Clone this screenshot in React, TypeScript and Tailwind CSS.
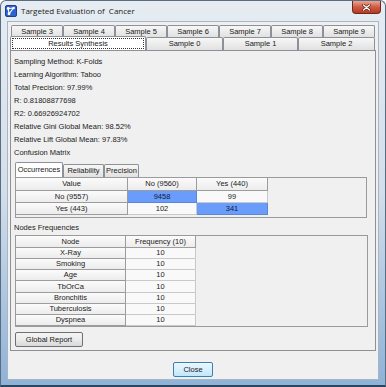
import React from "react";

const F = "font-['Liberation_Sans',Arial,sans-serif]";

function Tab({ label, w, selected, h }: { label: string; w?: string; selected?: boolean; h: string }) {
  return (
    <div
      className={`${w ?? "flex-1"} ${h} flex items-center justify-center border-t border-l border-r border-[#8d9096] rounded-t-[2px] text-[7.5px] text-[#1a1a1a] leading-none ${
        selected ? "bg-white relative z-10" : "bg-gradient-to-b from-[#f7f7f7] to-[#e1e1e1]"
      }`}
    >
      {label}
    </div>
  );
}

function HeadCell({ w, h, children }: { w: string; h: string; children: React.ReactNode }) {
  return (
    <div className={`${w} ${h} flex items-center justify-center border-r border-b border-[#9c9c9c] bg-gradient-to-b from-[#fbfbfb] to-[#ececec] text-[7.5px] text-[#1a1a1a] leading-none`}>
      {children}
    </div>
  );
}

function DataCell({ w, h, sel, children }: { w: string; h: string; sel?: boolean; children: React.ReactNode }) {
  return (
    <div
      className={`${w} ${h} flex items-center justify-center border-r border-b text-[7.5px] leading-none ${
        sel ? "bg-[#6a9cfb] border-[#5a86d6] text-[#0e1a3a]" : "bg-[#f9f9f9] border-[#c9c9c9] text-[#1a1a1a]"
      }`}
    >
      {children}
    </div>
  );
}

function Line({ children }: { children: React.ReactNode }) {
  return <div className="h-[13px] leading-[13px] text-[7.5px] text-[#1a1a1a] whitespace-pre">{children}</div>;
}

export default function App() {
  const nodes = ["X-Ray", "Smoking", "Age", "TbOrCa", "Bronchitis", "Tuberculosis", "Dyspnea"];
  const rowH = ["h-[11px]", "h-[11px]", "h-[11px]", "h-[12px]", "h-[11px]", "h-[11px]", "h-[11px]"];
  return (
    <div
      className={`w-[386px] h-[387px] flex flex-col bg-gradient-to-b from-[#e6ecf2] via-[#d2deea] to-[#8fb2d8] border border-[#5a6c80] border-b-[2px] border-b-[#2b4660] rounded-t-[6px] overflow-hidden ${F}`}
    >
      {/* Title bar */}
      <div className="h-[20px] flex items-start shrink-0">
        <div className="flex items-center h-[18px] pl-[4px] pt-[2px]">
          <svg width="12" height="12" viewBox="0 0 12 12">
            <rect x="0.5" y="0.5" width="11" height="11" rx="1.5" fill="#2f62cf" stroke="#1b3f91" />
            <path d="M3.2 3.5 L8.5 3 M3.2 3.5 L4 8.8 M8.5 3 L4 8.8" stroke="#ffffff" strokeWidth="1.1" fill="none" />
            <circle cx="3.2" cy="3.5" r="1.4" fill="#ffffff" />
            <circle cx="8.6" cy="3" r="1.3" fill="#ffffff" />
            <circle cx="4" cy="8.8" r="1.4" fill="#ffffff" />
          </svg>
          <span className="ml-[4px] text-[8px] text-[#1b1b1b] whitespace-pre font-['Open_Sans',Arial,sans-serif] leading-none">
            Targeted Evaluation of  Cancer
          </span>
        </div>
        <div className="ml-auto mr-[4px] w-[29px] h-[13px] rounded-b-[4px] border border-t-0 border-[#6b2a1c] bg-gradient-to-b from-[#e9a597] via-[#cf5b43] to-[#b8391f] flex items-center justify-center">
          <svg width="9" height="7" viewBox="0 0 9 7">
            <path d="M1.5 1 L7.5 6 M7.5 1 L1.5 6" stroke="#5a1a10" strokeWidth="2.6" strokeLinecap="round" />
            <path d="M1.5 1 L7.5 6 M7.5 1 L1.5 6" stroke="#ffffff" strokeWidth="1.4" strokeLinecap="round" />
          </svg>
        </div>
      </div>

      {/* Client area */}
      <div className="flex-1 mx-[6px] mb-[5px] bg-[#f0f0f0] border border-[#a8b5c3] flex flex-col px-[2px] pt-[3px]">
        {/* Tab row 1 */}
        <div className="flex h-[12px] mx-[1px]">
          {["Sample 3", "Sample 4", "Sample 5", "Sample 6", "Sample 7", "Sample 8", "Sample 9"].map((s) => (
            <Tab key={s} label={s} h="h-[12px]" />
          ))}
        </div>
        {/* Tab row 2 */}
        <div className="flex items-end h-[13px] mr-[1px]">
          <div className="w-[136px] h-[14px] bg-white border-t border-l border-r border-[#8d9096] rounded-t-[2px] relative z-10 p-[1px]">
            <div className="w-full h-full border border-dotted border-[#333] flex items-center justify-center text-[7.5px] leading-none text-[#1a1a1a]">
              Results Synthesis
            </div>
          </div>
          <Tab label="Sample 0" w="w-[77px]" h="h-[13px]" />
          <Tab label="Sample 1" w="w-[75px]" h="h-[13px]" />
          <Tab label="Sample 2" w="w-[77px]" h="h-[13px]" />
        </div>

        {/* Panel */}
        <div className="h-[301px] border border-[#8d9096] bg-[#f0f0f0] flex flex-col pl-[3px] pt-[4px]">
          <Line>Sampling Method: K-Folds</Line>
          <Line>Learning Algorithm: Taboo</Line>
          <Line>Total Precision: 97.99%</Line>
          <Line>R: 0.81808877698</Line>
          <Line>R2: 0.66926924702</Line>
          <Line>Relative Gini Global Mean: 98.52%</Line>
          <Line>Relative Lift Global Mean: 97.83%</Line>
          <Line>Confusion Matrix</Line>

          {/* Inner tabs */}
          <div className="ml-[1px] mt-[3px] flex items-end h-[15px]">
            <Tab label="Occurrences" w="w-[48px]" h="h-[15px]" selected />
            <Tab label="Reliability" w="w-[41px]" h="h-[13px]" />
            <Tab label="Precision" w="w-[35px]" h="h-[13px]" />
          </div>
          <div className="ml-[1px] w-[352px] h-[41px] border border-[#9a9a9a] bg-[#f0f0f0] flex flex-col">
            <div className="flex">
              <HeadCell w="w-[112px]" h="h-[13px]">Value</HeadCell>
              <HeadCell w="w-[69px]" h="h-[13px]">No (9560)</HeadCell>
              <HeadCell w="w-[71px]" h="h-[13px]">Yes (440)</HeadCell>
            </div>
            <div className="flex">
              <HeadCell w="w-[112px]" h="h-[12px]">No (9557)</HeadCell>
              <DataCell w="w-[69px]" h="h-[12px]" sel>9458</DataCell>
              <DataCell w="w-[71px]" h="h-[12px]">99</DataCell>
            </div>
            <div className="flex">
              <HeadCell w="w-[112px]" h="h-[12px]">Yes (443)</HeadCell>
              <DataCell w="w-[69px]" h="h-[12px]">102</DataCell>
              <DataCell w="w-[71px]" h="h-[12px]" sel>341</DataCell>
            </div>
          </div>

          <div className="mt-[3px]">
            <Line>Nodes Frequencies</Line>
          </div>

          <div className="ml-[1px] mt-[1px] w-[353px] h-[92px] border border-[#9a9a9a] bg-[#f0f0f0] flex flex-col">
            <div className="flex">
              <HeadCell w="w-[110px]" h="h-[12px]">Node</HeadCell>
              <HeadCell w="w-[70px]" h="h-[12px]">Frequency (10)</HeadCell>
            </div>
            {nodes.map((n, i) => (
              <div key={n} className="flex">
                <HeadCell w="w-[110px]" h={rowH[i]}>{n}</HeadCell>
                <DataCell w="w-[70px]" h={rowH[i]}>10</DataCell>
              </div>
            ))}
          </div>

          <div className="ml-[1px] mt-[5px]">
            <button className="w-[68px] h-[15px] rounded-[2px] border border-[#707070] bg-gradient-to-b from-[#f4f4f4] via-[#ebebeb] to-[#d8d8d8] text-[7.5px] leading-none text-[#1a1a1a] flex items-center justify-center">
              Global Report
            </button>
          </div>
        </div>

        {/* Close button */}
        <div className="flex justify-center pt-[11px]">
          <button className="w-[40px] h-[15px] rounded-[2px] border border-[#3c7fb1] bg-gradient-to-b from-[#eaf6fd] via-[#d9f0fc] to-[#bee6fd] text-[7.5px] leading-none text-[#1a1a1a] flex items-center justify-center">
            Close
          </button>
        </div>
      </div>
    </div>
  );
}
